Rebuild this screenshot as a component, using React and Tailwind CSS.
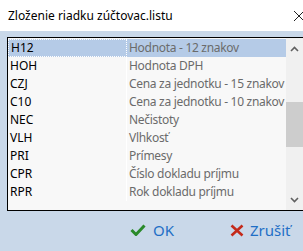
import React from "react";

const rows = [
  ["H12", "Hodnota - 12 znakov"],
  ["HOH", "Hodnota DPH"],
  ["CZJ", "Cena za jednotku - 15 znakov"],
  ["C10", "Cena za jednotku - 10 znakov"],
  ["NEC", "Nečistoty"],
  ["VLH", "Vlhkosť"],
  ["PRI", "Prímesy"],
  ["CPR", "Číslo dokladu príjmu"],
  ["RPR", "Rok dokladu príjmu"],
];

const font = { fontFamily: '"Segoe UI", "Noto Sans", "Open Sans", sans-serif' };

// Dialog: choose the column for the settlement sheet row
const App = () => {
  return (
    <div className="w-[303px] h-[251px] overflow-hidden bg-[#c9d8e9] flex flex-col" style={font}>
      {/* Title bar */}
      <div className="h-[31px] bg-white flex items-center justify-between pl-[8px] shrink-0">
        <span className="text-[12px] text-black">Zloženie riadku zúčtovac.listu</span>
        <svg width="12" height="12" viewBox="0 0 12 12" className="mr-[-2px]">
          <path d="M1 1 L11 11 M11 1 L1 11" stroke="#222" strokeWidth="1" />
        </svg>
      </div>

      {/* List */}
      <div className="mt-[6px] ml-[7px] w-[297px] h-[174px] border border-black bg-[#f8f8f8] flex shrink-0">
        <div className="w-[278px] pt-[1px] flex flex-col overflow-hidden">
          {rows.map(([code, name], i) => (
            <div
              key={code}
              className={
                "h-[18px] flex items-center text-[12px] " +
                (i === 0 ? "bg-[#b5cbe7]" : "")
              }
            >
              <div
                className={
                  "w-[119px] shrink-0 h-full flex items-center pl-[2px] text-black border-r border-[#ffffff] " +
                  (i === 0 ? "border border-dotted border-[#222] pl-[1px]" : "")
                }
              >
                {code}
              </div>
              <div className="pl-[2px] text-[#6b6b6b] whitespace-nowrap tracking-[-0.3px]">{name}</div>
            </div>
          ))}
        </div>
        {/* Scrollbar */}
        <div className="w-[17px] bg-[#f0f0f0] flex flex-col items-center">
          <svg width="9" height="6" viewBox="0 0 9 6" className="mt-[8px]">
            <path d="M1 5 L4.5 1.5 L8 5" stroke="#606060" strokeWidth="1.6" fill="none" />
          </svg>
          <div className="w-[17px] h-[45px] bg-[#cdcdcd] mt-[50px]" />
          <div className="flex-1" />
          <svg width="9" height="6" viewBox="0 0 9 6" className="mb-[7px]">
            <path d="M1 1 L4.5 4.5 L8 1" stroke="#606060" strokeWidth="1.6" fill="none" />
          </svg>
        </div>
      </div>

      {/* Buttons */}
      <div className="flex-1 flex items-center pb-[2px]">
        <div className="flex items-center ml-[130px] gap-[7px] text-[15px] text-[#1f6fc6]">
          <svg width="16" height="12" viewBox="0 0 16 12">
            <path d="M1.5 6 L6 10.5 L14.5 1.5" stroke="#2a8a2a" strokeWidth="3" fill="none" />
          </svg>
          <span>OK</span>
        </div>
        <div className="flex items-center ml-[56px] gap-[6px] text-[15px] text-[#1f6fc6]">
          <svg width="14" height="13" viewBox="0 0 14 13">
            <path d="M1.5 1.5 L12.5 11.5 M12.5 1.5 L1.5 11.5" stroke="#c42a1a" strokeWidth="2.6" fill="none" />
          </svg>
          <span>Zrušiť</span>
        </div>
      </div>
    </div>
  );
};

export default App;
